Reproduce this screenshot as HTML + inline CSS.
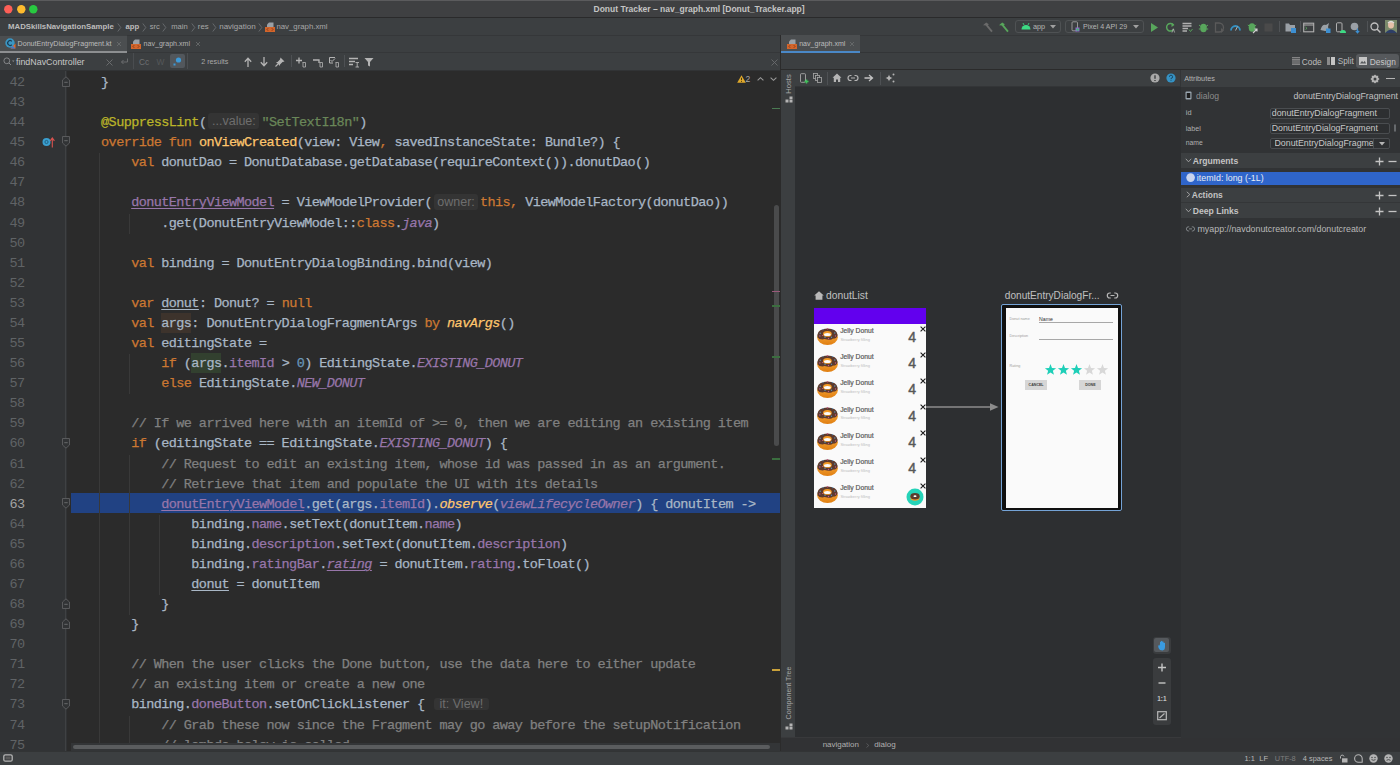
<!DOCTYPE html><html><head><meta charset="utf-8"><style>
*{margin:0;padding:0;box-sizing:border-box}
html,body{width:1400px;height:765px;overflow:hidden;background:#2b2b2b;font-family:"Liberation Sans",sans-serif}
#root{position:absolute;left:0;top:0;width:1400px;height:765px}
.t{position:absolute;white-space:pre;line-height:20px;height:20px}
.r{position:absolute}
.s{position:absolute;overflow:visible}
.code{position:absolute;left:71px;white-space:pre;-webkit-text-stroke:0.25px currentColor;font-family:"Liberation Mono",monospace;font-size:13.5px;letter-spacing:-0.58px;line-height:20px;height:20px;color:#a9b7c6}
.ln{position:absolute;left:0;width:24.5px;text-align:right;white-space:pre;font-family:"Liberation Mono",monospace;font-size:13.5px;letter-spacing:-0.58px;line-height:20px;height:20px;color:#606366}
.k{color:#cc7832}.fd{color:#ffc66d}.an{color:#bbb529}.st{color:#6a8759}.p{color:#9876aa}.i{font-style:italic}.n{color:#6897bb}.c{color:#808080}
.u{text-decoration:underline;text-underline-offset:2px;text-decoration-thickness:1px}
.hint{display:inline-block;position:relative;font-family:"Liberation Sans",sans-serif;font-size:12.5px;letter-spacing:0;-webkit-text-stroke:0;color:#6e6e6e;background:#343434;border-radius:3px;height:16px;line-height:16px;vertical-align:top;text-align:center;overflow:hidden}
</style></head><body><div class="r" style="left:0px;top:0px;width:1400px;height:17px;background:#3f4042;"></div>
<div class="r" style="left:0px;top:0px;width:1400px;height:1px;background:#5b5b5d;"></div>
<div class="r" style="left:0px;top:17px;width:1400px;height:1px;background:#2a2a2b;"></div>
<div class="r" style="left:0px;top:18px;width:1400px;height:17px;background:#3c3f41;"></div>
<div class="r" style="left:0px;top:35px;width:1400px;height:17px;background:#3c3f41;"></div>
<div class="r" style="left:0px;top:35px;width:1400px;height:1px;background:#353739;"></div>
<div class="r" style="left:0px;top:52px;width:781px;height:18px;background:#3c3f41;"></div>
<div class="r" style="left:0px;top:51.6px;width:781px;height:1px;background:#353739;"></div>
<div class="r" style="left:0px;top:69.5px;width:781px;height:1px;background:#313335;"></div>
<div class="r" style="left:781px;top:52px;width:619px;height:17px;background:#3c3f41;"></div>
<div class="r" style="left:781px;top:51.5px;width:619px;height:1px;background:#333537;"></div>
<div class="r" style="left:0px;top:70.5px;width:66.5px;height:681px;background:#313335;"></div>
<div class="r" style="left:66.5px;top:70.5px;width:714px;height:672px;background:#2b2b2b;"></div>
<div class="r" style="left:65.3px;top:70.5px;width:1px;height:681px;background:#3f4143;"></div>
<svg class="s" style="left:4.3999999999999995px;top:4.500000000000001px;" width="9" height="9" viewBox="0 0 9 9"><circle cx="4.3" cy="4.3" r="4.2" fill="#fe5f57"/></svg>
<svg class="s" style="left:16.9px;top:4.500000000000001px;" width="9" height="9" viewBox="0 0 9 9"><circle cx="4.3" cy="4.3" r="4.2" fill="#febb2e"/></svg>
<svg class="s" style="left:29.400000000000002px;top:4.500000000000001px;" width="9" height="9" viewBox="0 0 9 9"><circle cx="4.3" cy="4.3" r="4.2" fill="#28c840"/></svg>
<div class="t" style="left:593.5px;top:-1.4000000000000004px;font-size:8.5px;color:#c4c4c4;font-weight:bold;">Donut Tracker – nav_graph.xml [Donut_Tracker.app]</div>
<div class="r" style="left:71px;top:493.37999999999994px;width:710px;height:19.6px;background:#214283;"></div>
<div class="r" style="left:161.24px;top:312.65999999999997px;width:30.08px;height:20px;background:#3d332c;"></div>
<div class="r" style="left:191.32px;top:352.82px;width:30.08px;height:20px;background:#32402f;"></div>
<div class="r" style="left:98.5px;top:153.32px;width:1px;height:602.4px;background:#393939;"></div>
<div class="r" style="left:128.5px;top:213.56px;width:1px;height:20.08px;background:#393939;"></div>
<div class="r" style="left:128.5px;top:354.12px;width:1px;height:40.16px;background:#393939;"></div>
<div class="r" style="left:128.5px;top:454.52px;width:1px;height:160.64px;background:#393939;"></div>
<div class="r" style="left:128.5px;top:715.56px;width:1px;height:40.16px;background:#393939;"></div>
<div class="r" style="left:158.5px;top:514.76px;width:1px;height:80.32px;background:#393939;"></div>
<div class="ln" style="top:73.0px;">42</div>
<div class="code" style="top:73.0px">    }</div>
<div class="ln" style="top:93.08px;">43</div>
<div class="code" style="top:93.08px"></div>
<div class="ln" style="top:113.16px;">44</div>
<div class="code" style="top:113.16px">    <span class="an">@SuppressLint</span>(<span class="hint" style="width:51px;margin-left:2px;margin-right:2px;top:0.2px;height:16px;line-height:16px">...value:</span><span class="st">&quot;SetTextI18n&quot;</span>)</div>
<div class="ln" style="top:133.24px;">45</div>
<div class="code" style="top:133.24px">    <span class="k">override fun </span><span class="fd">onViewCreated</span>(view: View<span class="k">,</span> savedInstanceState: Bundle?) {</div>
<div class="ln" style="top:153.32px;">46</div>
<div class="code" style="top:153.32px">        <span class="k">val </span>donutDao = DonutDatabase.getDatabase(requireContext()).donutDao()</div>
<div class="ln" style="top:173.39999999999998px;">47</div>
<div class="code" style="top:173.39999999999998px"></div>
<div class="ln" style="top:193.48px;">48</div>
<div class="code" style="top:193.48px">        <span class="p u">donutEntryViewModel</span> = ViewModelProvider(<span class="hint" style="width:44px;margin-left:2px;margin-right:2px;top:0.2px;height:16px;line-height:16px">owner:</span><span class="k">this,</span> ViewModelFactory(donutDao))</div>
<div class="ln" style="top:213.56px;">49</div>
<div class="code" style="top:213.56px">            .get(DonutEntryViewModel::<span class="k">class</span>.<span class="p i">java</span>)</div>
<div class="ln" style="top:233.64px;">50</div>
<div class="code" style="top:233.64px"></div>
<div class="ln" style="top:253.71999999999997px;">51</div>
<div class="code" style="top:253.71999999999997px">        <span class="k">val </span>binding = DonutEntryDialogBinding.bind(view)</div>
<div class="ln" style="top:273.79999999999995px;">52</div>
<div class="code" style="top:273.79999999999995px"></div>
<div class="ln" style="top:293.88px;">53</div>
<div class="code" style="top:293.88px">        <span class="k">var </span><span class="u">donut</span>: Donut? = <span class="k">null</span></div>
<div class="ln" style="top:313.96px;">54</div>
<div class="code" style="top:313.96px">        <span class="k">val </span>args: DonutEntryDialogFragmentArgs <span class="k">by </span><span class="fd i">navArgs</span>()</div>
<div class="ln" style="top:334.03999999999996px;">55</div>
<div class="code" style="top:334.03999999999996px">        <span class="k">val </span>editingState =</div>
<div class="ln" style="top:354.12px;">56</div>
<div class="code" style="top:354.12px">            <span class="k">if </span>(args.<span class="p">itemId</span> &gt; <span class="n">0</span>) EditingState.<span class="p i">EXISTING_DONUT</span></div>
<div class="ln" style="top:374.2px;">57</div>
<div class="code" style="top:374.2px">            <span class="k">else </span>EditingState.<span class="p i">NEW_DONUT</span></div>
<div class="ln" style="top:394.28px;">58</div>
<div class="code" style="top:394.28px"></div>
<div class="ln" style="top:414.35999999999996px;">59</div>
<div class="code" style="top:414.35999999999996px">        <span class="c">// If we arrived here with an itemId of &gt;= 0, then we are editing an existing item</span></div>
<div class="ln" style="top:434.43999999999994px;">60</div>
<div class="code" style="top:434.43999999999994px">        <span class="k">if </span>(editingState == EditingState.<span class="p i">EXISTING_DONUT</span>) {</div>
<div class="ln" style="top:454.52px;">61</div>
<div class="code" style="top:454.52px">            <span class="c">// Request to edit an existing item, whose id was passed in as an argument.</span></div>
<div class="ln" style="top:474.59999999999997px;">62</div>
<div class="code" style="top:474.59999999999997px">            <span class="c">// Retrieve that item and populate the UI with its details</span></div>
<div class="ln" style="top:494.67999999999995px;color:#a4a3a3">63</div>
<div class="code" style="top:494.67999999999995px">            <span class="p u">donutEntryViewModel</span>.get(args.<span class="p">itemId</span>).<span class="fd i">observe</span>(<span class="p i">viewLifecycleOwner</span>) { donutItem -&gt;</div>
<div class="ln" style="top:514.76px;">64</div>
<div class="code" style="top:514.76px">                binding.<span class="p">name</span>.setText(donutItem.<span class="p">name</span>)</div>
<div class="ln" style="top:534.8399999999999px;">65</div>
<div class="code" style="top:534.8399999999999px">                binding.<span class="p">description</span>.setText(donutItem.<span class="p">description</span>)</div>
<div class="ln" style="top:554.92px;">66</div>
<div class="code" style="top:554.92px">                binding.<span class="p">ratingBar</span>.<span class="p i u">rating</span> = donutItem.<span class="p">rating</span>.toFloat()</div>
<div class="ln" style="top:575.0px;">67</div>
<div class="code" style="top:575.0px">                <span class="u">donut</span> = donutItem</div>
<div class="ln" style="top:595.0799999999999px;">68</div>
<div class="code" style="top:595.0799999999999px">            }</div>
<div class="ln" style="top:615.16px;">69</div>
<div class="code" style="top:615.16px">        }</div>
<div class="ln" style="top:635.24px;">70</div>
<div class="code" style="top:635.24px"></div>
<div class="ln" style="top:655.3199999999999px;">71</div>
<div class="code" style="top:655.3199999999999px">        <span class="c">// When the user clicks the Done button, use the data here to either update</span></div>
<div class="ln" style="top:675.4px;">72</div>
<div class="code" style="top:675.4px">        <span class="c">// an existing item or create a new one</span></div>
<div class="ln" style="top:695.4799999999999px;">73</div>
<div class="code" style="top:695.4799999999999px">        binding.<span class="p">doneButton</span>.setOnClickListener { <span class="hint" style="width:54.6px;margin-left:2px;margin-right:0px;top:2.5px;height:12.3px;line-height:12.3px">it: View!</span></div>
<div class="ln" style="top:715.56px;">74</div>
<div class="code" style="top:715.56px">            <span class="c">// Grab these now since the Fragment may go away before the setupNotification</span></div>
<div class="ln" style="top:735.64px;">75</div>
<div class="code" style="top:735.64px">            <span class="c">// lambda below is called</span></div>
<svg class="s" style="left:61.5px;top:76.1px;" width="9" height="11" viewBox="0 0 9 11"><path d="M0.5 10.5 V4 L4 0.8 L7.5 4 V10.5 Z" fill="#313335" stroke="#5d5f61" stroke-width="0.9"/><path d="M2.3 6.3 H5.7" stroke="#6e7072" stroke-width="0.9"/></svg>
<svg class="s" style="left:61.5px;top:136.34px;" width="9" height="11" viewBox="0 0 9 11"><path d="M0.5 0.5 V7 L4 10.2 L7.5 7 V0.5 Z" fill="#313335" stroke="#5d5f61" stroke-width="0.9"/><path d="M2.3 4.7 H5.7" stroke="#6e7072" stroke-width="0.9"/></svg>
<svg class="s" style="left:61.5px;top:437.53999999999996px;" width="9" height="11" viewBox="0 0 9 11"><path d="M0.5 0.5 V7 L4 10.2 L7.5 7 V0.5 Z" fill="#313335" stroke="#5d5f61" stroke-width="0.9"/><path d="M2.3 4.7 H5.7" stroke="#6e7072" stroke-width="0.9"/></svg>
<svg class="s" style="left:61.5px;top:497.78px;" width="9" height="11" viewBox="0 0 9 11"><path d="M0.5 0.5 V7 L4 10.2 L7.5 7 V0.5 Z" fill="#313335" stroke="#5d5f61" stroke-width="0.9"/><path d="M2.3 4.7 H5.7" stroke="#6e7072" stroke-width="0.9"/></svg>
<svg class="s" style="left:61.5px;top:598.18px;" width="9" height="11" viewBox="0 0 9 11"><path d="M0.5 10.5 V4 L4 0.8 L7.5 4 V10.5 Z" fill="#313335" stroke="#5d5f61" stroke-width="0.9"/><path d="M2.3 6.3 H5.7" stroke="#6e7072" stroke-width="0.9"/></svg>
<svg class="s" style="left:61.5px;top:618.26px;" width="9" height="11" viewBox="0 0 9 11"><path d="M0.5 10.5 V4 L4 0.8 L7.5 4 V10.5 Z" fill="#313335" stroke="#5d5f61" stroke-width="0.9"/><path d="M2.3 6.3 H5.7" stroke="#6e7072" stroke-width="0.9"/></svg>
<svg class="s" style="left:61.5px;top:698.5799999999999px;" width="9" height="11" viewBox="0 0 9 11"><path d="M0.5 0.5 V7 L4 10.2 L7.5 7 V0.5 Z" fill="#313335" stroke="#5d5f61" stroke-width="0.9"/><path d="M2.3 4.7 H5.7" stroke="#6e7072" stroke-width="0.9"/></svg>
<svg class="s" style="left:42px;top:136.84px;" width="16" height="11" viewBox="0 0 16 11"><circle cx="4.5" cy="5" r="4" fill="#3a9fd0"/><circle cx="4.5" cy="5" r="1.6" fill="none" stroke="#1e5a7a" stroke-width="0.9"/><path d="M10.3 10.5 V1.5 M8.2 3.8 L10.3 1 L12.4 3.8" stroke="#d9534f" stroke-width="1.1" fill="none"/></svg>
<svg class="s" style="left:737px;top:75px;" width="9" height="8" viewBox="0 0 9 8"><path d="M4.5 0.3 L8.8 7.7 H0.2 Z" fill="#e0a92b"/><path d="M4.5 2.8 V5.2 M4.5 6 V6.9" stroke="#3a2f10" stroke-width="0.9"/></svg>
<div class="t" style="left:745.5px;top:68.5px;font-size:8.5px;color:#a9a9a9;font-weight:normal;">2</div>
<svg class="s" style="left:757px;top:76.5px;" width="7" height="4" viewBox="0 0 7 4"><path d="M0.6 3.4 L3.5 0.7 L6.4 3.4" stroke="#9a9a9a" stroke-width="1.1" fill="none"/></svg>
<svg class="s" style="left:770px;top:76.5px;" width="7" height="4" viewBox="0 0 7 4"><path d="M0.6 0.6 L3.5 3.3 L6.4 0.6" stroke="#9a9a9a" stroke-width="1.1" fill="none"/></svg>
<div class="r" style="left:773.7px;top:205px;width:5px;height:240.5px;background:#4a4b4c;border-radius:3px"></div>
<div class="r" style="left:772px;top:107.7px;width:8.5px;height:1.6px;background:#4a7a52;"></div>
<div class="r" style="left:772px;top:290.59999999999997px;width:8.5px;height:1.6px;background:#9a5a7a;"></div>
<div class="r" style="left:772px;top:305.2px;width:8.5px;height:1.6px;background:#3b6e3f;"></div>
<div class="r" style="left:772px;top:356.2px;width:8.5px;height:1.6px;background:#3b6e3f;"></div>
<div class="r" style="left:772px;top:458.2px;width:8.5px;height:1.6px;background:#3b6e3f;"></div>
<div class="r" style="left:772px;top:669.2px;width:8.5px;height:1.6px;background:#c9a13a;"></div>
<div class="r" style="left:71px;top:742.5px;width:709.5px;height:8.5px;background:#333537;"></div>
<div class="r" style="left:73px;top:744.5px;width:697px;height:4.5px;background:#5a5c5e;border-radius:3px"></div>
<div class="r" style="left:0px;top:751px;width:1400px;height:14px;background:#3c3f41;"></div>
<div class="r" style="left:0px;top:750.5px;width:1400px;height:0.7px;background:#323435;"></div>
<svg class="s" style="left:3px;top:754px;" width="10" height="8" viewBox="0 0 10 8"><rect x="0.8" y="0.8" width="8.4" height="6.4" rx="1.5" fill="none" stroke="#b4b4b4" stroke-width="1.3"/><rect x="2.6" y="2.6" width="4.8" height="2.8" fill="#5a5a5a"/></svg>
<div class="t" style="left:1244.5px;top:749.2px;font-size:7.4px;color:#b8b8b8;font-weight:normal;">1:1</div>
<div class="t" style="left:1259.3px;top:749.2px;font-size:7.6px;color:#b8b8b8;font-weight:normal;">LF</div>
<div class="t" style="left:1274.8px;top:749.2px;font-size:7.4px;color:#7e7e7e;font-weight:normal;">UTF-8</div>
<div class="t" style="left:1302.8px;top:749.2px;font-size:7.4px;color:#b8b8b8;font-weight:normal;">4 spaces</div>
<svg class="s" style="left:1339px;top:754px;" width="9" height="9" viewBox="0 0 9 9"><path d="M1.5 4.5 V2.5 A1.8 1.8 0 0 1 5 2.5" stroke="#b4b4b4" stroke-width="1" fill="none"/><rect x="3" y="4.3" width="5.5" height="4.2" fill="#b4b4b4"/></svg>
<svg class="s" style="left:1354px;top:754px;" width="9" height="9" viewBox="0 0 9 9"><path d="M8.2 8.3 V4.5 A3.8 3.8 0 1 0 4.4 8.3 Z" stroke="#b4b4b4" stroke-width="1.1" fill="none" stroke-linejoin="round"/></svg>
<svg class="s" style="left:1369px;top:754px;" width="9" height="9" viewBox="0 0 9 9"><circle cx="4.5" cy="4.5" r="4.2" fill="#b4b4b4"/><circle cx="3" cy="3.5" r="0.7" fill="#3c3f41"/><circle cx="6" cy="3.5" r="0.7" fill="#3c3f41"/><path d="M2.5 5.6 Q4.5 6.9 6.5 5.6" stroke="#3c3f41" stroke-width="0.9" fill="none"/></svg>
<svg class="s" style="left:1384px;top:754px;" width="9" height="9" viewBox="0 0 9 9"><circle cx="4.5" cy="4.5" r="4.2" fill="#b4b4b4"/><circle cx="3" cy="3.5" r="0.7" fill="#3c3f41"/><circle cx="6" cy="3.5" r="0.7" fill="#3c3f41"/><path d="M2.5 6.3 Q4.5 5 6.5 6.3" stroke="#3c3f41" stroke-width="0.9" fill="none"/></svg>
<div class="t" style="left:8px;top:17.0px;font-size:7.8px;color:#bcbcbc;font-weight:bold;">MADSkillsNavigationSample</div>
<svg class="s" style="left:116.5px;top:22.5px;" width="5" height="9" viewBox="0 0 5 9"><path d="M0.8 0.5 L3.8 4.5 L0.8 8.5" stroke="#6a6d70" stroke-width="0.9" fill="none"/></svg>
<div class="t" style="left:125.5px;top:17.0px;font-size:7.7px;color:#bcbcbc;font-weight:bold;">app</div>
<svg class="s" style="left:141.5px;top:22.5px;" width="5" height="9" viewBox="0 0 5 9"><path d="M0.8 0.5 L3.8 4.5 L0.8 8.5" stroke="#6a6d70" stroke-width="0.9" fill="none"/></svg>
<div class="t" style="left:149.8px;top:17.0px;font-size:7.6px;color:#a8a8a8;font-weight:normal;">src</div>
<svg class="s" style="left:162px;top:22.5px;" width="5" height="9" viewBox="0 0 5 9"><path d="M0.8 0.5 L3.8 4.5 L0.8 8.5" stroke="#6a6d70" stroke-width="0.9" fill="none"/></svg>
<div class="t" style="left:171.2px;top:17.0px;font-size:7.6px;color:#a8a8a8;font-weight:normal;">main</div>
<svg class="s" style="left:190.5px;top:22.5px;" width="5" height="9" viewBox="0 0 5 9"><path d="M0.8 0.5 L3.8 4.5 L0.8 8.5" stroke="#6a6d70" stroke-width="0.9" fill="none"/></svg>
<div class="t" style="left:197.8px;top:17.0px;font-size:7.8px;color:#a8a8a8;font-weight:normal;">res</div>
<svg class="s" style="left:212px;top:22.5px;" width="5" height="9" viewBox="0 0 5 9"><path d="M0.8 0.5 L3.8 4.5 L0.8 8.5" stroke="#6a6d70" stroke-width="0.9" fill="none"/></svg>
<div class="t" style="left:219.2px;top:17.0px;font-size:8px;color:#a8a8a8;font-weight:normal;">navigation</div>
<svg class="s" style="left:258px;top:22.5px;" width="5" height="9" viewBox="0 0 5 9"><path d="M0.8 0.5 L3.8 4.5 L0.8 8.5" stroke="#6a6d70" stroke-width="0.9" fill="none"/></svg>
<svg class="s" style="left:265px;top:21.5px;" width="10" height="10" viewBox="0 0 10 10"><path d="M4 0.5 H8.5 V5 H2 V2.5 Z" fill="#9aa0a6"/><rect x="0" y="5" width="10" height="5" fill="#d2652b"/><path d="M3.2 6.2 L2 7.5 L3.2 8.8 M6.8 6.2 L8 7.5 L6.8 8.8" stroke="#7a2f10" stroke-width="0.8" fill="none"/></svg>
<div class="t" style="left:276.4px;top:17.0px;font-size:7.8px;color:#a8a8a8;font-weight:normal;">nav_graph.xml</div>
<svg class="s" style="left:981.5px;top:21.5px;" width="11" height="11" viewBox="0 0 11 11"><path d="M1 3.2 L4.2 0.6 L6.8 2.2 L5.6 3.4 Z" fill="#6b6b6b"/><path d="M4.2 2.6 L10 9.6" stroke="#6b6b6b" stroke-width="1.8"/></svg>
<svg class="s" style="left:997.7px;top:21.5px;" width="11" height="11" viewBox="0 0 11 11"><path d="M1 3.2 L4.2 0.6 L6.8 2.2 L5.6 3.4 Z" fill="#58a65c"/><path d="M4.2 2.6 L10 9.6" stroke="#58a65c" stroke-width="1.8"/></svg>
<div class="r" style="left:1015px;top:19.7px;width:46px;height:13.7px;background:none;border:1px solid #4f5254;border-radius:3px"></div>
<svg class="s" style="left:1021px;top:22px;" width="10" height="8" viewBox="0 0 10 8"><path d="M0.5 7.5 A4.5 4.5 0 0 1 9.5 7.5 Z" fill="#3ddc84"/><path d="M2 1 L3 3 M8 1 L7 3" stroke="#3ddc84" stroke-width="0.8"/></svg>
<div class="t" style="left:1033px;top:17.0px;font-size:7.3px;color:#b4b4b4;font-weight:normal;">app</div>
<svg class="s" style="left:1049.5px;top:25.2px;" width="6" height="4" viewBox="0 0 6 4"><path d="M0 0 H6 L3 3.5 Z" fill="#a0a0a0"/></svg>
<div class="r" style="left:1065px;top:19.7px;width:78.5px;height:13.7px;background:none;border:1px solid #4f5254;border-radius:3px"></div>
<svg class="s" style="left:1071px;top:21px;" width="9" height="11" viewBox="0 0 9 11"><rect x="1" y="0.8" width="5.5" height="9" rx="1" fill="none" stroke="#a0a0a0" stroke-width="0.9"/><rect x="4.5" y="6.5" width="4" height="4" fill="#8f6bd0"/><rect x="5.6" y="7.6" width="2" height="2" fill="#2fd05a"/></svg>
<div class="t" style="left:1083px;top:17.0px;font-size:7.1px;color:#b4b4b4;font-weight:normal;">Pixel 4 API 29</div>
<svg class="s" style="left:1132.5px;top:25.2px;" width="6" height="4" viewBox="0 0 6 4"><path d="M0 0 H6 L3 3.5 Z" fill="#a0a0a0"/></svg>
<svg class="s" style="left:1148.5px;top:21.5px;" width="11" height="11" viewBox="0 0 11 11"><path d="M2 1 L9 5.5 L2 10 Z" fill="#58a65c"/></svg>
<svg class="s" style="left:1164.5px;top:21.5px;" width="11" height="11" viewBox="0 0 11 11"><path d="M8.5 3 A3.8 3.8 0 1 0 8.8 7" stroke="#58a65c" stroke-width="1.5" fill="none"/><path d="M6.5 0.8 L9.5 3 L6.5 5" fill="#58a65c"/><path d="M7 10.5 L8.3 6.8 L9.6 10.5" stroke="#b0b0b0" stroke-width="0.8" fill="none"/></svg>
<svg class="s" style="left:1181.5px;top:21.5px;" width="11" height="11" viewBox="0 0 11 11"><path d="M0.5 1.5 H9.5 M0.5 4 H9.5 M0.5 6.5 H6 M0.5 9 H5" stroke="#b0b0b0" stroke-width="1.4"/><path d="M7 7.5 L8.5 9.5 L10.5 7" stroke="#58a65c" stroke-width="0.9" fill="none"/></svg>
<svg class="s" style="left:1197.5px;top:21.5px;" width="11" height="11" viewBox="0 0 11 11"><ellipse cx="5.5" cy="6" rx="3.3" ry="4.3" fill="#58a65c"/><path d="M1 3 L3 4.5 M10 3 L8 4.5 M0.8 7 H2.5 M10.2 7 H8.5" stroke="#58a65c" stroke-width="1"/></svg>
<svg class="s" style="left:1214.1px;top:21.5px;" width="11" height="11" viewBox="0 0 11 11"><path d="M1.5 1 H5 A4.5 4.5 0 0 1 5 10 H1.5 Z" fill="none" stroke="#5a5a5a" stroke-width="1.3"/><path d="M7 6 L10 8.5 L7 11 Z" fill="#5a5a5a"/></svg>
<svg class="s" style="left:1230.1px;top:21.5px;" width="11" height="11" viewBox="0 0 11 11"><path d="M1 8.5 A4.5 4.5 0 0 1 10 8.5" stroke="#3592c4" stroke-width="1.8" fill="none"/><path d="M5.5 8.5 L7.5 4.5" stroke="#b0b0b0" stroke-width="1"/></svg>
<svg class="s" style="left:1246.5px;top:21.5px;" width="11" height="11" viewBox="0 0 11 11"><ellipse cx="5" cy="5.5" rx="3.3" ry="4.2" fill="#58a65c"/><path d="M0.8 3 L2.5 4.3 M9.2 3 L7.5 4.3" stroke="#58a65c" stroke-width="1"/><path d="M6 11 L10 7 M7.5 7 H10 V9.5" stroke="#d0d0d0" stroke-width="1.1" fill="none"/></svg>
<svg class="s" style="left:1262.5px;top:21.5px;" width="11" height="11" viewBox="0 0 11 11"><rect x="1.5" y="1.5" width="8" height="8" fill="#4a4a4a"/></svg>
<svg class="s" style="left:1284.5px;top:21.5px;" width="11" height="11" viewBox="0 0 11 11"><path d="M0.5 1.5 H4 L5 3 H10 V9.5 H0.5 Z" fill="#9aa0a6"/><rect x="6" y="6" width="5" height="5" fill="#3d8fd1"/></svg>
<svg class="s" style="left:1302.5px;top:21.5px;" width="11" height="11" viewBox="0 0 11 11"><rect x="0.7" y="1.2" width="10" height="8.6" fill="none" stroke="#b0b0b0" stroke-width="1.1"/><path d="M0.7 3 H10.7" stroke="#b0b0b0" stroke-width="1"/><path d="M2.5 5 L4 6.3 L2.5 7.6" stroke="#58a65c" stroke-width="0.9" fill="none"/></svg>
<svg class="s" style="left:1319.5px;top:21.5px;" width="11" height="11" viewBox="0 0 11 11"><path d="M0.5 8 Q2 2 6 3 L9 1 L8 5 Q10 9 5 9 Z" fill="#9aa0a6"/><rect x="6" y="6.5" width="4.5" height="4.5" fill="#3d8fd1"/></svg>
<svg class="s" style="left:1334.5px;top:21.5px;" width="11" height="11" viewBox="0 0 11 11"><rect x="1.5" y="0.8" width="5.5" height="9" rx="1" fill="none" stroke="#b0b0b0" stroke-width="1"/><path d="M5 11 A3 3 0 0 1 11 11 Z" fill="#3ddc84"/></svg>
<svg class="s" style="left:1350.1px;top:21.5px;" width="11" height="11" viewBox="0 0 11 11"><circle cx="4.5" cy="4.5" r="3.8" fill="#9aa0a6"/><path d="M7.5 6.5 V10.5 M5.8 8.8 L7.5 10.8 L9.2 8.8" stroke="#3d8fd1" stroke-width="1.2" fill="none"/></svg>
<svg class="s" style="left:1370.0px;top:21.5px;" width="11" height="11" viewBox="0 0 11 11"><circle cx="4.5" cy="4.5" r="3.5" stroke="#c0c0c0" stroke-width="1.3" fill="none"/><path d="M7 7 L10.5 10.5" stroke="#c0c0c0" stroke-width="1.5"/></svg>
<div class="r" style="left:1278.6px;top:21px;width:0.8px;height:11px;background:#505356;"></div>
<div class="r" style="left:1299.5px;top:21px;width:0.8px;height:11px;background:#505356;"></div>
<div class="r" style="left:1367px;top:21px;width:0.8px;height:11px;background:#505356;"></div>
<svg class="s" style="left:1385px;top:20px;" width="12" height="13" viewBox="0 0 12 13"><rect x="0" y="0" width="12" height="13" fill="#7a8a6a"/><ellipse cx="6" cy="5" rx="3" ry="3.6" fill="#e6c0a8"/><path d="M0 13 Q6 6 12 13 Z" fill="#2d3e66"/><path d="M3 3 Q6 0 9 3" stroke="#ddd" stroke-width="1.2" fill="none"/></svg>
<div class="r" style="left:0px;top:35px;width:127px;height:17px;background:#4b4e50;"></div>
<div class="r" style="left:0px;top:35px;width:127px;height:0.9px;background:#3c3f41;"></div>
<div class="r" style="left:0px;top:50.8px;width:127px;height:2px;background:#8d8f91;"></div>
<svg class="s" style="left:5px;top:38px;" width="11" height="11" viewBox="0 0 11 11"><circle cx="5" cy="5" r="4.7" fill="#3b97c4"/><path d="M6.8 3.3 A2.4 2.4 0 1 0 6.8 6.7" stroke="#1b3c55" stroke-width="1.2" fill="none"/><path d="M5.5 10.5 L10.5 5.5 V10.5 Z" fill="#e06a2a"/><path d="M5.5 10.5 L8 8 L10.5 10.5 Z" fill="#3b7bd8"/></svg>
<div class="t" style="left:17.5px;top:34.0px;font-size:7.15px;color:#bcbcbc;font-weight:normal;">DonutEntryDialogFragment.kt</div>
<svg class="s" style="left:115.5px;top:41.0px;" width="6" height="6" viewBox="0 0 6 6"><path d="M1 1 L5 5 M5 1 L1 5" stroke="#6c6e70" stroke-width="0.8"/></svg>
<svg class="s" style="left:131px;top:38.5px;" width="10" height="10" viewBox="0 0 10 10"><path d="M4 0.5 H8.5 V5 H2 V2.5 Z" fill="#9aa0a6"/><rect x="0" y="5" width="10" height="5" fill="#d2652b"/><path d="M3.2 6.2 L2 7.5 L3.2 8.8 M6.8 6.2 L8 7.5 L6.8 8.8" stroke="#7a2f10" stroke-width="0.8" fill="none"/></svg>
<div class="t" style="left:143.5px;top:34.0px;font-size:7.1px;color:#b4b4b4;font-weight:normal;">nav_graph.xml</div>
<svg class="s" style="left:194.5px;top:41.0px;" width="6" height="6" viewBox="0 0 6 6"><path d="M1 1 L5 5 M5 1 L1 5" stroke="#6c6e70" stroke-width="0.8"/></svg>
<div class="r" style="left:781px;top:35px;width:79px;height:17px;background:#4b4e50;"></div>
<div class="r" style="left:781px;top:50.5px;width:79px;height:2.4px;background:#4a88c7;"></div>
<svg class="s" style="left:787px;top:38.5px;" width="10" height="10" viewBox="0 0 10 10"><path d="M4 0.5 H8.5 V5 H2 V2.5 Z" fill="#9aa0a6"/><rect x="0" y="5" width="10" height="5" fill="#d2652b"/><path d="M3.2 6.2 L2 7.5 L3.2 8.8 M6.8 6.2 L8 7.5 L6.8 8.8" stroke="#7a2f10" stroke-width="0.8" fill="none"/></svg>
<div class="t" style="left:799.2px;top:34.0px;font-size:7.05px;color:#bcbcbc;font-weight:normal;">nav_graph.xml</div>
<svg class="s" style="left:848.5px;top:41.0px;" width="6" height="6" viewBox="0 0 6 6"><path d="M1 1 L5 5 M5 1 L1 5" stroke="#6c6e70" stroke-width="0.8"/></svg>
<div class="r" style="left:780.3px;top:35px;width:1px;height:716px;background:#2b2b2b;"></div>
<svg class="s" style="left:3px;top:57px;" width="12" height="9" viewBox="0 0 12 9"><circle cx="3.8" cy="3.8" r="2.9" stroke="#8a8c8e" stroke-width="0.9" fill="none"/><path d="M6 6 L8 8" stroke="#8a8c8e" stroke-width="1"/><path d="M9 3.5 H11.5 L10.25 5 Z" fill="#8a8c8e"/></svg>
<div class="t" style="left:16px;top:52.2px;font-size:8.9px;color:#c8c8c8;font-weight:normal;">findNavController</div>
<svg class="s" style="left:105.5px;top:58.7px;" width="7" height="7" viewBox="0 0 7 7"><path d="M0.5 0.5 L6.5 6.5 M6.5 0.5 L0.5 6.5" stroke="#6e7072" stroke-width="0.9"/></svg>
<svg class="s" style="left:119.5px;top:58.2px;" width="9" height="8" viewBox="0 0 9 8"><path d="M7.5 0.5 V4 H1.5 M3.5 2 L1.5 4 L3.5 6" stroke="#6e7072" stroke-width="0.9" fill="none"/></svg>
<div class="r" style="left:133px;top:53px;width:0.8px;height:16px;background:#4a4d50;"></div>
<div class="t" style="left:139px;top:52.2px;font-size:8.4px;color:#6e7072;font-weight:normal;">Cc</div>
<div class="t" style="left:156.5px;top:52.2px;font-size:8.4px;color:#55585a;font-weight:normal;">W</div>
<div class="r" style="left:169.5px;top:54px;width:15px;height:14px;background:#52575c;border-radius:2px"></div>
<svg class="s" style="left:172px;top:56px;" width="11" height="10" viewBox="0 0 11 10"><circle cx="6.5" cy="4" r="2.6" fill="#3d9ad8"/><rect x="1.5" y="7.5" width="2" height="2" fill="#3d9ad8"/></svg>
<div class="r" style="left:187px;top:53px;width:0.8px;height:16px;background:#4a4d50;"></div>
<div class="t" style="left:201.2px;top:52.2px;font-size:7.2px;color:#a8a8a8;font-weight:normal;">2 results</div>
<svg class="s" style="left:242.9px;top:57.2px;" width="10" height="10" viewBox="0 0 10 10"><path d="M5 10 V1.5 M1.8 4.7 L5 1.3 L8.2 4.7" stroke="#b4b4b4" stroke-width="1.3" fill="none"/></svg>
<svg class="s" style="left:259px;top:57.2px;" width="10" height="10" viewBox="0 0 10 10"><path d="M5 0 V8.5 M1.8 5.3 L5 8.7 L8.2 5.3" stroke="#b4b4b4" stroke-width="1.3" fill="none"/></svg>
<svg class="s" style="left:275px;top:57.2px;" width="10" height="10" viewBox="0 0 10 10"><path d="M5.5 0.5 L9.5 4.5 L7.5 5 L5 7.5 L5 9 L1 5 L2.5 5 L5 2.5 Z" fill="#b4b4b4"/><path d="M3 7 L0.5 9.5" stroke="#b4b4b4" stroke-width="1.1"/></svg>
<svg class="s" style="left:296px;top:57.2px;" width="10" height="10" viewBox="0 0 10 10"><path d="M3 0.5 V6.5 M0 3.5 H6" stroke="#b4b4b4" stroke-width="1.3"/><path d="M6.5 5.5 H9.5 M7 5.5 V10 H9.5 V5.5" stroke="#b4b4b4" stroke-width="0.8" fill="none"/></svg>
<svg class="s" style="left:313px;top:57.2px;" width="10" height="10" viewBox="0 0 10 10"><path d="M0 3 H6 V6" stroke="#b4b4b4" stroke-width="1.3" fill="none"/><path d="M6.5 5.5 H9.5 M7 5.5 V10 H9.5 V5.5" stroke="#b4b4b4" stroke-width="0.8" fill="none"/></svg>
<svg class="s" style="left:329px;top:57.2px;" width="10" height="10" viewBox="0 0 10 10"><path d="M0.5 0.5 H6 M0.5 0.5 V6 H4" stroke="#b4b4b4" stroke-width="1" fill="none"/><path d="M1.5 3 L3 4.5 L6 1.5" stroke="#b4b4b4" stroke-width="1" fill="none"/><path d="M6.5 5.5 H9.5 M7 5.5 V10 H9.5 V5.5" stroke="#b4b4b4" stroke-width="0.8" fill="none"/></svg>
<svg class="s" style="left:349px;top:57.2px;" width="10" height="10" viewBox="0 0 10 10"><path d="M0 1.5 H9 M0 4.5 H6 M0 7.5 H4" stroke="#b4b4b4" stroke-width="1.3"/><path d="M6.5 5.5 H10 M8.2 5.5 V10 M6.5 10 H10" stroke="#b4b4b4" stroke-width="0.9"/></svg>
<svg class="s" style="left:364px;top:57.2px;" width="10" height="10" viewBox="0 0 10 10"><path d="M0.5 1 H9.5 L6 5 V9.5 L4 8.5 V5 Z" fill="#b4b4b4"/></svg>
<div class="r" style="left:291px;top:55px;width:0.8px;height:12px;background:#4e5154;"></div>
<div class="r" style="left:344px;top:55px;width:0.8px;height:12px;background:#4e5154;"></div>
<svg class="s" style="left:770.5px;top:58.7px;" width="7" height="7" viewBox="0 0 7 7"><path d="M0.5 0.5 L6.5 6.5 M6.5 0.5 L0.5 6.5" stroke="#6a6c6e" stroke-width="0.9"/></svg>
<svg class="s" style="left:1291.5px;top:57px;" width="8" height="8" viewBox="0 0 8 8"><path d="M0 0.8 H8 M0 2.9 H8 M0 5 H8 M0 7.1 H8" stroke="#9a9a9a" stroke-width="1.1"/></svg>
<div class="t" style="left:1301.8px;top:52.2px;font-size:8.35px;color:#bcbcbc;font-weight:normal;">Code</div>
<svg class="s" style="left:1327px;top:57px;" width="8" height="8" viewBox="0 0 8 8"><rect x="0" y="0" width="3" height="8" fill="#8a8a8a"/><rect x="4" y="0" width="4" height="8" fill="#c4c4c4"/></svg>
<div class="t" style="left:1337.8px;top:52.2px;font-size:8.2px;color:#bcbcbc;font-weight:normal;">Split</div>
<div class="r" style="left:1356px;top:54px;width:43px;height:13.6px;background:#56595c;border-radius:3px"></div>
<svg class="s" style="left:1359px;top:57px;" width="8" height="8" viewBox="0 0 8 8"><rect x="0" y="0" width="8" height="8" fill="#c4c4c4"/><path d="M1 6.5 L3 4 L4.5 5.5 L5.8 3.8 L7 6.5 Z" fill="#56595c"/></svg>
<div class="t" style="left:1369.8px;top:52.2px;font-size:8.35px;color:#c8c8c8;font-weight:normal;">Design</div>
<div class="r" style="left:781px;top:69.5px;width:14px;height:668px;background:#3c3f41;"></div>
<div class="r" style="left:794.5px;top:69.5px;width:1px;height:668px;background:#333537;"></div>
<div class="r" style="left:795px;top:69.5px;width:386px;height:17px;background:#3c3f41;"></div>
<div class="r" style="left:795px;top:86.3px;width:386px;height:0.8px;background:#333537;"></div>
<div class="r" style="left:795px;top:87px;width:386px;height:650.5px;background:#2d2f31;"></div>
<div class="t" style="left:779px;top:74px;width:20px;height:20px;font-size:7.6px;color:#a8a8a8;line-height:20px;transform-origin:10px 10px;transform:translate(0px,0px) rotate(-90deg);text-align:center">Hosts</div>
<svg class="s" style="left:785px;top:96px;" width="8" height="7" viewBox="0 0 8 7"><rect x="0.5" y="3.5" width="3" height="3" fill="#b4b4b4"/><rect x="4.5" y="0.5" width="3" height="3" fill="#b4b4b4"/><rect x="4.5" y="4" width="3" height="2.5" fill="#b4b4b4"/></svg>
<div class="t" style="left:751px;top:682.5px;width:76px;height:20px;font-size:7.1px;color:#a8a8a8;line-height:20px;transform-origin:38px 10px;transform:rotate(-90deg);text-align:center">Component Tree</div>
<svg class="s" style="left:785px;top:723px;" width="8" height="7" viewBox="0 0 8 7"><rect x="0.5" y="3.5" width="3" height="3" fill="#b4b4b4"/><rect x="4.5" y="0.5" width="3" height="3" fill="#b4b4b4"/><rect x="4.5" y="4" width="3" height="2.5" fill="#b4b4b4"/></svg>
<svg class="s" style="left:799.4px;top:73.3px;" width="10" height="11" viewBox="0 0 10 11"><rect x="1.5" y="0.7" width="5" height="8.6" rx="0.8" fill="none" stroke="#a8a8a8" stroke-width="0.9"/><path d="M7.5 6.5 V10.5 M5.5 8.5 H9.5" stroke="#3fbf5a" stroke-width="1.5"/></svg>
<svg class="s" style="left:812.5px;top:73.3px;" width="10" height="11" viewBox="0 0 10 11"><rect x="0.5" y="0.5" width="4" height="5" fill="none" stroke="#a8a8a8" stroke-width="0.8"/><rect x="2.5" y="2.5" width="4" height="5" fill="#3c3f41" stroke="#a8a8a8" stroke-width="0.8"/><rect x="4.5" y="4.5" width="4" height="5" fill="#3c3f41" stroke="#a8a8a8" stroke-width="0.8"/></svg>
<svg class="s" style="left:831.6px;top:73.3px;" width="10" height="11" viewBox="0 0 10 11"><path d="M5 0.5 L9.5 4.8 H8.2 V9 H1.8 V4.8 H0.5 Z" fill="#b4b4b4"/><rect x="4" y="6.5" width="2" height="2.5" fill="#3c3f41"/></svg>
<svg class="s" style="left:848px;top:73.3px;" width="10" height="11" viewBox="0 0 10 11"><path d="M3.5 2.5 H2.5 A2.5 2.5 0 0 0 2.5 7.5 H3.5 M6.5 2.5 H7.5 A2.5 2.5 0 0 1 7.5 7.5 H6.5 M3 5 H7" stroke="#b4b4b4" stroke-width="1.2" fill="none"/></svg>
<svg class="s" style="left:864px;top:73.3px;" width="10" height="11" viewBox="0 0 10 11"><path d="M0.5 5 H8 M5 2 L8.5 5 L5 8" stroke="#c4c4c4" stroke-width="1.3" fill="none"/></svg>
<svg class="s" style="left:884.6px;top:73.3px;" width="10" height="11" viewBox="0 0 10 11"><path d="M4 1.5 Q4.5 4.5 7.5 5 Q4.5 5.5 4 8.5 Q3.5 5.5 0.5 5 Q3.5 4.5 4 1.5 Z" fill="#b4b4b4"/><circle cx="8.5" cy="1.5" r="1" fill="#b4b4b4"/><circle cx="8.5" cy="8.5" r="1" fill="#b4b4b4"/></svg>
<div class="r" style="left:826.6px;top:72px;width:0.8px;height:13px;background:#4e5154;"></div>
<div class="r" style="left:879.5px;top:72px;width:0.8px;height:13px;background:#4e5154;"></div>
<svg class="s" style="left:1149.5px;top:73.3px;" width="10" height="10" viewBox="0 0 10 10"><circle cx="5" cy="5" r="4.6" fill="#a8a8a8"/><path d="M5 2.2 V5.8 M5 7 V7.9" stroke="#3c3f41" stroke-width="1.4"/></svg>
<svg class="s" style="left:1166px;top:73.3px;" width="10" height="10" viewBox="0 0 10 10"><circle cx="5" cy="5" r="4.6" fill="#3592c4"/><path d="M3.4 3.8 A1.6 1.6 0 1 1 5 5.4 V6.2 M5 7.2 V7.9" stroke="#1b4a66" stroke-width="1" fill="none"/></svg>
<svg class="s" style="left:814px;top:291px;" width="10" height="9" viewBox="0 0 10 9"><path d="M5 0.3 L9.8 4.6 H8.4 V8.7 H1.6 V4.6 H0.2 Z" fill="#b8b8b8"/></svg>
<div class="t" style="left:826px;top:286.3px;font-size:10.3px;color:#c0c0c0;font-weight:normal;">donutList</div>
<div class="r" style="left:814px;top:308px;width:112px;height:199.5px;background:#fafafa;"></div>
<div class="r" style="left:814px;top:308px;width:112px;height:15.5px;background:#6200ee;"></div>
<svg class="s" style="left:816.9px;top:327.3px;" width="21" height="18" viewBox="0 0 21 18"><defs><linearGradient id="dg" x1="0" y1="0" x2="0" y2="1"><stop offset="0" stop-color="#ffb443"/><stop offset="1" stop-color="#e07f12"/></linearGradient></defs><ellipse cx="10.5" cy="10.3" rx="10.4" ry="7.6" fill="url(#dg)"/><path d="M0.3 8 A10.2 6.6 0 0 1 20.7 8 Q20.5 11 18 11.5 Q16 11 14.5 12.5 Q12 13.2 10 12.5 Q7.5 11.5 5.5 12.5 Q2 12.5 0.6 10.2 Z" fill="#5e3b2e"/><ellipse cx="10.4" cy="6.9" rx="4.4" ry="2.9" fill="#f39a24"/><ellipse cx="10.4" cy="7.6" rx="3.4" ry="1.5" fill="#fbfbfb"/><g fill="#5a97c0"><circle cx="6" cy="2.6" r="0.7"/><circle cx="15.5" cy="2.6" r="0.7"/><circle cx="3.2" cy="6.3" r="0.7"/><circle cx="17.8" cy="6" r="0.7"/><circle cx="8" cy="10.3" r="0.7"/><circle cx="14.5" cy="10.3" r="0.7"/></g><g fill="#c75c86"><circle cx="10.5" cy="1.7" r="0.7"/><circle cx="2.8" cy="9" r="0.7"/><circle cx="18.5" cy="9" r="0.7"/><circle cx="11.5" cy="11.5" r="0.7"/><circle cx="5.5" cy="8.5" r="0.6"/></g></svg>
<div class="t" style="left:840.2px;top:321.0px;font-size:6.75px;color:#5a5a5a;font-weight:normal;-webkit-text-stroke:0.2px #5a5a5a">Jelly Donut</div>
<div class="t" style="left:840.4px;top:329.7px;font-size:4.0px;color:#bdbdbd;font-weight:normal;">Strawberry filling</div>
<svg class="s" style="left:919.5px;top:325.5px;" width="6" height="6" viewBox="0 0 6 6"><path d="M0.6 0.6 L5.4 5.4 M5.4 0.6 L0.6 5.4" stroke="#1a1a1a" stroke-width="1.1"/></svg>
<div class="t" style="left:908.3px;top:326.9px;font-size:14px;color:#585858;font-weight:normal;-webkit-text-stroke:0.45px #585858">4</div>
<svg class="s" style="left:816.9px;top:353.5px;" width="21" height="18" viewBox="0 0 21 18"><defs><linearGradient id="dg" x1="0" y1="0" x2="0" y2="1"><stop offset="0" stop-color="#ffb443"/><stop offset="1" stop-color="#e07f12"/></linearGradient></defs><ellipse cx="10.5" cy="10.3" rx="10.4" ry="7.6" fill="url(#dg)"/><path d="M0.3 8 A10.2 6.6 0 0 1 20.7 8 Q20.5 11 18 11.5 Q16 11 14.5 12.5 Q12 13.2 10 12.5 Q7.5 11.5 5.5 12.5 Q2 12.5 0.6 10.2 Z" fill="#5e3b2e"/><ellipse cx="10.4" cy="6.9" rx="4.4" ry="2.9" fill="#f39a24"/><ellipse cx="10.4" cy="7.6" rx="3.4" ry="1.5" fill="#fbfbfb"/><g fill="#5a97c0"><circle cx="6" cy="2.6" r="0.7"/><circle cx="15.5" cy="2.6" r="0.7"/><circle cx="3.2" cy="6.3" r="0.7"/><circle cx="17.8" cy="6" r="0.7"/><circle cx="8" cy="10.3" r="0.7"/><circle cx="14.5" cy="10.3" r="0.7"/></g><g fill="#c75c86"><circle cx="10.5" cy="1.7" r="0.7"/><circle cx="2.8" cy="9" r="0.7"/><circle cx="18.5" cy="9" r="0.7"/><circle cx="11.5" cy="11.5" r="0.7"/><circle cx="5.5" cy="8.5" r="0.6"/></g></svg>
<div class="t" style="left:840.2px;top:347.2px;font-size:6.75px;color:#5a5a5a;font-weight:normal;-webkit-text-stroke:0.2px #5a5a5a">Jelly Donut</div>
<div class="t" style="left:840.4px;top:355.9px;font-size:4.0px;color:#bdbdbd;font-weight:normal;">Strawberry filling</div>
<svg class="s" style="left:919.5px;top:351.7px;" width="6" height="6" viewBox="0 0 6 6"><path d="M0.6 0.6 L5.4 5.4 M5.4 0.6 L0.6 5.4" stroke="#1a1a1a" stroke-width="1.1"/></svg>
<div class="t" style="left:908.3px;top:353.09999999999997px;font-size:14px;color:#585858;font-weight:normal;-webkit-text-stroke:0.45px #585858">4</div>
<svg class="s" style="left:816.9px;top:379.7px;" width="21" height="18" viewBox="0 0 21 18"><defs><linearGradient id="dg" x1="0" y1="0" x2="0" y2="1"><stop offset="0" stop-color="#ffb443"/><stop offset="1" stop-color="#e07f12"/></linearGradient></defs><ellipse cx="10.5" cy="10.3" rx="10.4" ry="7.6" fill="url(#dg)"/><path d="M0.3 8 A10.2 6.6 0 0 1 20.7 8 Q20.5 11 18 11.5 Q16 11 14.5 12.5 Q12 13.2 10 12.5 Q7.5 11.5 5.5 12.5 Q2 12.5 0.6 10.2 Z" fill="#5e3b2e"/><ellipse cx="10.4" cy="6.9" rx="4.4" ry="2.9" fill="#f39a24"/><ellipse cx="10.4" cy="7.6" rx="3.4" ry="1.5" fill="#fbfbfb"/><g fill="#5a97c0"><circle cx="6" cy="2.6" r="0.7"/><circle cx="15.5" cy="2.6" r="0.7"/><circle cx="3.2" cy="6.3" r="0.7"/><circle cx="17.8" cy="6" r="0.7"/><circle cx="8" cy="10.3" r="0.7"/><circle cx="14.5" cy="10.3" r="0.7"/></g><g fill="#c75c86"><circle cx="10.5" cy="1.7" r="0.7"/><circle cx="2.8" cy="9" r="0.7"/><circle cx="18.5" cy="9" r="0.7"/><circle cx="11.5" cy="11.5" r="0.7"/><circle cx="5.5" cy="8.5" r="0.6"/></g></svg>
<div class="t" style="left:840.2px;top:373.4px;font-size:6.75px;color:#5a5a5a;font-weight:normal;-webkit-text-stroke:0.2px #5a5a5a">Jelly Donut</div>
<div class="t" style="left:840.4px;top:382.09999999999997px;font-size:4.0px;color:#bdbdbd;font-weight:normal;">Strawberry filling</div>
<svg class="s" style="left:919.5px;top:377.9px;" width="6" height="6" viewBox="0 0 6 6"><path d="M0.6 0.6 L5.4 5.4 M5.4 0.6 L0.6 5.4" stroke="#1a1a1a" stroke-width="1.1"/></svg>
<div class="t" style="left:908.3px;top:379.29999999999995px;font-size:14px;color:#585858;font-weight:normal;-webkit-text-stroke:0.45px #585858">4</div>
<svg class="s" style="left:816.9px;top:405.90000000000003px;" width="21" height="18" viewBox="0 0 21 18"><defs><linearGradient id="dg" x1="0" y1="0" x2="0" y2="1"><stop offset="0" stop-color="#ffb443"/><stop offset="1" stop-color="#e07f12"/></linearGradient></defs><ellipse cx="10.5" cy="10.3" rx="10.4" ry="7.6" fill="url(#dg)"/><path d="M0.3 8 A10.2 6.6 0 0 1 20.7 8 Q20.5 11 18 11.5 Q16 11 14.5 12.5 Q12 13.2 10 12.5 Q7.5 11.5 5.5 12.5 Q2 12.5 0.6 10.2 Z" fill="#5e3b2e"/><ellipse cx="10.4" cy="6.9" rx="4.4" ry="2.9" fill="#f39a24"/><ellipse cx="10.4" cy="7.6" rx="3.4" ry="1.5" fill="#fbfbfb"/><g fill="#5a97c0"><circle cx="6" cy="2.6" r="0.7"/><circle cx="15.5" cy="2.6" r="0.7"/><circle cx="3.2" cy="6.3" r="0.7"/><circle cx="17.8" cy="6" r="0.7"/><circle cx="8" cy="10.3" r="0.7"/><circle cx="14.5" cy="10.3" r="0.7"/></g><g fill="#c75c86"><circle cx="10.5" cy="1.7" r="0.7"/><circle cx="2.8" cy="9" r="0.7"/><circle cx="18.5" cy="9" r="0.7"/><circle cx="11.5" cy="11.5" r="0.7"/><circle cx="5.5" cy="8.5" r="0.6"/></g></svg>
<div class="t" style="left:840.2px;top:399.6px;font-size:6.75px;color:#5a5a5a;font-weight:normal;-webkit-text-stroke:0.2px #5a5a5a">Jelly Donut</div>
<div class="t" style="left:840.4px;top:408.3px;font-size:4.0px;color:#bdbdbd;font-weight:normal;">Strawberry filling</div>
<svg class="s" style="left:919.5px;top:404.1px;" width="6" height="6" viewBox="0 0 6 6"><path d="M0.6 0.6 L5.4 5.4 M5.4 0.6 L0.6 5.4" stroke="#1a1a1a" stroke-width="1.1"/></svg>
<div class="t" style="left:908.3px;top:405.5px;font-size:14px;color:#585858;font-weight:normal;-webkit-text-stroke:0.45px #585858">4</div>
<svg class="s" style="left:816.9px;top:432.1px;" width="21" height="18" viewBox="0 0 21 18"><defs><linearGradient id="dg" x1="0" y1="0" x2="0" y2="1"><stop offset="0" stop-color="#ffb443"/><stop offset="1" stop-color="#e07f12"/></linearGradient></defs><ellipse cx="10.5" cy="10.3" rx="10.4" ry="7.6" fill="url(#dg)"/><path d="M0.3 8 A10.2 6.6 0 0 1 20.7 8 Q20.5 11 18 11.5 Q16 11 14.5 12.5 Q12 13.2 10 12.5 Q7.5 11.5 5.5 12.5 Q2 12.5 0.6 10.2 Z" fill="#5e3b2e"/><ellipse cx="10.4" cy="6.9" rx="4.4" ry="2.9" fill="#f39a24"/><ellipse cx="10.4" cy="7.6" rx="3.4" ry="1.5" fill="#fbfbfb"/><g fill="#5a97c0"><circle cx="6" cy="2.6" r="0.7"/><circle cx="15.5" cy="2.6" r="0.7"/><circle cx="3.2" cy="6.3" r="0.7"/><circle cx="17.8" cy="6" r="0.7"/><circle cx="8" cy="10.3" r="0.7"/><circle cx="14.5" cy="10.3" r="0.7"/></g><g fill="#c75c86"><circle cx="10.5" cy="1.7" r="0.7"/><circle cx="2.8" cy="9" r="0.7"/><circle cx="18.5" cy="9" r="0.7"/><circle cx="11.5" cy="11.5" r="0.7"/><circle cx="5.5" cy="8.5" r="0.6"/></g></svg>
<div class="t" style="left:840.2px;top:425.8px;font-size:6.75px;color:#5a5a5a;font-weight:normal;-webkit-text-stroke:0.2px #5a5a5a">Jelly Donut</div>
<div class="t" style="left:840.4px;top:434.5px;font-size:4.0px;color:#bdbdbd;font-weight:normal;">Strawberry filling</div>
<svg class="s" style="left:919.5px;top:430.3px;" width="6" height="6" viewBox="0 0 6 6"><path d="M0.6 0.6 L5.4 5.4 M5.4 0.6 L0.6 5.4" stroke="#1a1a1a" stroke-width="1.1"/></svg>
<div class="t" style="left:908.3px;top:431.7px;font-size:14px;color:#585858;font-weight:normal;-webkit-text-stroke:0.45px #585858">4</div>
<svg class="s" style="left:816.9px;top:458.3px;" width="21" height="18" viewBox="0 0 21 18"><defs><linearGradient id="dg" x1="0" y1="0" x2="0" y2="1"><stop offset="0" stop-color="#ffb443"/><stop offset="1" stop-color="#e07f12"/></linearGradient></defs><ellipse cx="10.5" cy="10.3" rx="10.4" ry="7.6" fill="url(#dg)"/><path d="M0.3 8 A10.2 6.6 0 0 1 20.7 8 Q20.5 11 18 11.5 Q16 11 14.5 12.5 Q12 13.2 10 12.5 Q7.5 11.5 5.5 12.5 Q2 12.5 0.6 10.2 Z" fill="#5e3b2e"/><ellipse cx="10.4" cy="6.9" rx="4.4" ry="2.9" fill="#f39a24"/><ellipse cx="10.4" cy="7.6" rx="3.4" ry="1.5" fill="#fbfbfb"/><g fill="#5a97c0"><circle cx="6" cy="2.6" r="0.7"/><circle cx="15.5" cy="2.6" r="0.7"/><circle cx="3.2" cy="6.3" r="0.7"/><circle cx="17.8" cy="6" r="0.7"/><circle cx="8" cy="10.3" r="0.7"/><circle cx="14.5" cy="10.3" r="0.7"/></g><g fill="#c75c86"><circle cx="10.5" cy="1.7" r="0.7"/><circle cx="2.8" cy="9" r="0.7"/><circle cx="18.5" cy="9" r="0.7"/><circle cx="11.5" cy="11.5" r="0.7"/><circle cx="5.5" cy="8.5" r="0.6"/></g></svg>
<div class="t" style="left:840.2px;top:452.0px;font-size:6.75px;color:#5a5a5a;font-weight:normal;-webkit-text-stroke:0.2px #5a5a5a">Jelly Donut</div>
<div class="t" style="left:840.4px;top:460.7px;font-size:4.0px;color:#bdbdbd;font-weight:normal;">Strawberry filling</div>
<svg class="s" style="left:919.5px;top:456.5px;" width="6" height="6" viewBox="0 0 6 6"><path d="M0.6 0.6 L5.4 5.4 M5.4 0.6 L0.6 5.4" stroke="#1a1a1a" stroke-width="1.1"/></svg>
<div class="t" style="left:908.3px;top:457.9px;font-size:14px;color:#585858;font-weight:normal;-webkit-text-stroke:0.45px #585858">4</div>
<svg class="s" style="left:816.9px;top:484.5px;" width="21" height="18" viewBox="0 0 21 18"><defs><linearGradient id="dg" x1="0" y1="0" x2="0" y2="1"><stop offset="0" stop-color="#ffb443"/><stop offset="1" stop-color="#e07f12"/></linearGradient></defs><ellipse cx="10.5" cy="10.3" rx="10.4" ry="7.6" fill="url(#dg)"/><path d="M0.3 8 A10.2 6.6 0 0 1 20.7 8 Q20.5 11 18 11.5 Q16 11 14.5 12.5 Q12 13.2 10 12.5 Q7.5 11.5 5.5 12.5 Q2 12.5 0.6 10.2 Z" fill="#5e3b2e"/><ellipse cx="10.4" cy="6.9" rx="4.4" ry="2.9" fill="#f39a24"/><ellipse cx="10.4" cy="7.6" rx="3.4" ry="1.5" fill="#fbfbfb"/><g fill="#5a97c0"><circle cx="6" cy="2.6" r="0.7"/><circle cx="15.5" cy="2.6" r="0.7"/><circle cx="3.2" cy="6.3" r="0.7"/><circle cx="17.8" cy="6" r="0.7"/><circle cx="8" cy="10.3" r="0.7"/><circle cx="14.5" cy="10.3" r="0.7"/></g><g fill="#c75c86"><circle cx="10.5" cy="1.7" r="0.7"/><circle cx="2.8" cy="9" r="0.7"/><circle cx="18.5" cy="9" r="0.7"/><circle cx="11.5" cy="11.5" r="0.7"/><circle cx="5.5" cy="8.5" r="0.6"/></g></svg>
<div class="t" style="left:840.2px;top:478.2px;font-size:6.75px;color:#5a5a5a;font-weight:normal;-webkit-text-stroke:0.2px #5a5a5a">Jelly Donut</div>
<div class="t" style="left:840.4px;top:486.9px;font-size:4.0px;color:#bdbdbd;font-weight:normal;">Strawberry filling</div>
<svg class="s" style="left:919.5px;top:482.7px;" width="6" height="6" viewBox="0 0 6 6"><path d="M0.6 0.6 L5.4 5.4 M5.4 0.6 L0.6 5.4" stroke="#1a1a1a" stroke-width="1.1"/></svg>
<svg class="s" style="left:906px;top:488px;" width="18" height="18" viewBox="0 0 18 18"><circle cx="9" cy="9" r="8.5" fill="#25d3b8"/></svg>
<svg class="s" style="left:910px;top:492px;" width="10" height="9" viewBox="0 0 10 9"><ellipse cx="5" cy="5.5" rx="4.6" ry="3.2" fill="#f59b2b"/><ellipse cx="5" cy="4.3" rx="4.6" ry="3.2" fill="#5b3a2c"/><ellipse cx="5" cy="4.2" rx="1.5" ry="0.9" fill="#fff"/></svg>
<svg class="s" style="left:926px;top:402px;" width="74" height="10" viewBox="0 0 74 10"><path d="M0 5 H66" stroke="#8c8c8c" stroke-width="1.6"/><path d="M64 1.2 L72.5 5 L64 8.8 Z" fill="#8c8c8c"/></svg>
<div class="t" style="left:1004.8px;top:286.3px;font-size:10.1px;color:#c0c0c0;font-weight:normal;">donutEntryDialogFr...</div>
<svg class="s" style="left:1106.5px;top:292px;" width="11" height="7" viewBox="0 0 11 7"><path d="M3.8 1 H2.8 A2.5 2.5 0 0 0 2.8 6 H3.8 M7.2 1 H8.2 A2.5 2.5 0 0 1 8.2 6 H7.2 M3.5 3.5 H7.5" stroke="#b8b8b8" stroke-width="1.2" fill="none"/></svg>
<div class="r" style="left:1001.3px;top:303.6px;width:120.3px;height:207.6px;background:#101010;border:1.3px solid #74a3d6;border-radius:2px"></div>
<div class="r" style="left:1005.5px;top:308px;width:112px;height:199.5px;background:#fafafa;"></div>
<div class="t" style="left:1009.6px;top:309px;font-size:3.7px;color:#9a9a9a;font-weight:normal;">Donut name</div>
<div class="t" style="left:1039px;top:308.7px;font-size:5.2px;color:#303030;font-weight:normal;">Name</div>
<div class="r" style="left:1039px;top:322.2px;width:74px;height:0.7px;background:#a8a8a8;"></div>
<div class="t" style="left:1009.6px;top:325.8px;font-size:3.7px;color:#9a9a9a;font-weight:normal;">Description</div>
<div class="r" style="left:1039px;top:339.2px;width:74px;height:0.7px;background:#a8a8a8;"></div>
<div class="t" style="left:1009.6px;top:355.8px;font-size:3.7px;color:#9a9a9a;font-weight:normal;">Rating</div>
<svg class="s" style="left:1044.5px;top:363.8px;" width="64" height="12" viewBox="0 0 64 12"><polygon points="5.50,0.10 6.97,3.98 11.11,4.18 7.88,6.77 8.97,10.77 5.50,8.50 2.03,10.77 3.12,6.77 -0.11,4.18 4.03,3.98" fill="#1ecfb8"/><polygon points="18.50,0.10 19.97,3.98 24.11,4.18 20.88,6.77 21.97,10.77 18.50,8.50 15.03,10.77 16.12,6.77 12.89,4.18 17.03,3.98" fill="#1ecfb8"/><polygon points="31.50,0.10 32.97,3.98 37.11,4.18 33.88,6.77 34.97,10.77 31.50,8.50 28.03,10.77 29.12,6.77 25.89,4.18 30.03,3.98" fill="#1ecfb8"/><polygon points="44.50,0.10 45.97,3.98 50.11,4.18 46.88,6.77 47.97,10.77 44.50,8.50 41.03,10.77 42.12,6.77 38.89,4.18 43.03,3.98" fill="#d8d8d8"/><polygon points="57.50,0.10 58.97,3.98 63.11,4.18 59.88,6.77 60.97,10.77 57.50,8.50 54.03,10.77 55.12,6.77 51.89,4.18 56.03,3.98" fill="#d8d8d8"/></svg>
<div class="r" style="left:1024.8px;top:380.2px;width:22px;height:10.1px;background:#d6d6d6;"></div>
<div class="t" style="left:1028.6px;top:375.2px;font-size:3.6px;color:#3a3a3a;font-weight:bold;">CANCEL</div>
<div class="r" style="left:1079px;top:380px;width:22px;height:10.2px;background:#d6d6d6;"></div>
<div class="t" style="left:1085.2px;top:375.2px;font-size:3.6px;color:#3a3a3a;font-weight:bold;">DONE</div>
<div class="r" style="left:1152.7px;top:636.6px;width:18.3px;height:17.4px;background:#3a3c3e;border-radius:3px"></div>
<div class="r" style="left:1154.3px;top:638.2px;width:15px;height:14px;background:#55595d;border-radius:2px"></div>
<svg class="s" style="left:1156.5px;top:640px;" width="11" height="11" viewBox="0 0 11 11"><path d="M3 10 Q1 8 1.2 6 L2.2 4.5 L3 6 V2 Q3.5 1.2 4 2 V5 V1.2 Q4.7 0.5 5.3 1.2 V5 V1.8 Q6 1 6.6 1.8 V5.5 V3 Q7.3 2.3 8 3 V7 Q8 10 5.5 10.5 Z" fill="#3a9be0"/></svg>
<div class="r" style="left:1152.7px;top:657.8px;width:18.3px;height:67.5px;background:#3a3c3e;border-radius:3px"></div>
<svg class="s" style="left:1157px;top:663px;" width="10" height="9" viewBox="0 0 10 9"><path d="M5 0.5 V8.5 M1 4.5 H9" stroke="#c4c4c4" stroke-width="1.4"/></svg>
<svg class="s" style="left:1157px;top:679px;" width="10" height="9" viewBox="0 0 10 9"><path d="M1.5 4 H8.5" stroke="#c4c4c4" stroke-width="1.4"/></svg>
<div class="t" style="left:1157.3px;top:689.4px;font-size:6.4px;color:#c4c4c4;font-weight:bold;">1:1</div>
<svg class="s" style="left:1156.5px;top:711px;" width="10" height="10" viewBox="0 0 10 10"><rect x="0.7" y="0.7" width="8.6" height="8" fill="none" stroke="#b8b8b8" stroke-width="1.2"/><path d="M2.5 7 L7.5 2.5" stroke="#b8b8b8" stroke-width="1.1"/></svg>
<div class="r" style="left:781px;top:737.3px;width:619px;height:13.5px;background:#313234;"></div>
<div class="r" style="left:781px;top:737.2px;width:619px;height:0.8px;background:#38393b;"></div>
<div class="t" style="left:822.7px;top:735.4px;font-size:7.95px;color:#b0b0b0;font-weight:normal;">navigation</div>
<svg class="s" style="left:866px;top:743px;" width="4" height="5" viewBox="0 0 4 5"><path d="M0.5 0.5 L2.8 2.5 L0.5 4.5" stroke="#5f6163" stroke-width="0.8" fill="none"/></svg>
<div class="t" style="left:874.3px;top:735.4px;font-size:8.05px;color:#b0b0b0;font-weight:normal;">dialog</div>
<div class="r" style="left:1180.3px;top:69.5px;width:1px;height:17px;background:#333537;"></div>
<div class="r" style="left:1181px;top:69.5px;width:219px;height:17px;background:#3c3f41;"></div>
<div class="r" style="left:1181px;top:86.5px;width:219px;height:651px;background:#313335;"></div>
<div class="t" style="left:1184.2px;top:68.5px;font-size:7.25px;color:#b4b4b4;font-weight:normal;">Attributes</div>
<svg class="s" style="left:1370px;top:73.5px;" width="10" height="10" viewBox="0 0 10 10"><polygon points="9.60,5.00 8.14,6.30 8.25,8.25 6.30,8.14 5.00,9.60 3.70,8.14 1.75,8.25 1.86,6.30 0.40,5.00 1.86,3.70 1.75,1.75 3.70,1.86 5.00,0.40 6.30,1.86 8.25,1.75 8.14,3.70" fill="#b4b4b4"/><circle cx="5" cy="5" r="1.5" fill="#3c3f41"/></svg>
<div class="r" style="left:1386px;top:78px;width:8.5px;height:1.3px;background:#b4b4b4;"></div>
<svg class="s" style="left:1185px;top:91.3px;" width="7" height="9" viewBox="0 0 7 9"><rect x="0.5" y="0.5" width="6" height="8" rx="1" fill="#9aa6b0"/><rect x="1.7" y="2" width="3.6" height="5" fill="#1e1e1e"/></svg>
<div class="t" style="left:1196px;top:86px;font-size:8.6px;color:#8c8c8c;font-weight:normal;">dialog</div>
<div class="t" style="left:1293.4px;top:86px;font-size:8.75px;color:#c0c0c0;font-weight:normal;">donutEntryDialogFragment</div>
<div class="t" style="left:1185.8px;top:103px;font-size:7.4px;color:#b0b0b0;font-weight:normal;">id</div>
<div class="t" style="left:1185.8px;top:118.5px;font-size:7.1px;color:#b0b0b0;font-weight:normal;">label</div>
<div class="t" style="left:1185.8px;top:133.3px;font-size:6.8px;color:#b0b0b0;font-weight:normal;">name</div>
<div class="r" style="left:1270px;top:107.5px;width:119.6px;height:11.3px;background:#2d2f31;border:1px solid #4a4d50;border-radius:2px"></div>
<div class="r" style="left:1270px;top:122.5px;width:119.6px;height:11.3px;background:#2d2f31;border:1px solid #4a4d50;border-radius:2px"></div>
<div class="r" style="left:1270px;top:137.5px;width:119.6px;height:11.3px;background:#2d2f31;border:1px solid #4a4d50;border-radius:2px"></div>
<div class="t" style="left:1271.8px;top:103px;font-size:8.8px;color:#c8c8c8;font-weight:normal;">donutEntryDialogFragment</div>
<div class="t" style="left:1271.8px;top:118.30000000000001px;font-size:8.75px;color:#c8c8c8;font-weight:normal;">DonutEntryDialogFragment</div>
<div class="r" style="left:1393.5px;top:124px;width:2.5px;height:8px;background:none;border:0.8px solid #66696c;border-radius:1px"></div>
<div class="t" style="left:1274.5px;top:133.3px;width:98px;overflow:hidden;font-size:8.8px;color:#c8c8c8">DonutEntryDialogFragment</div>
<div class="r" style="left:1373px;top:138.5px;width:1px;height:9.5px;background:#4a4d50;"></div>
<svg class="s" style="left:1379px;top:141.8px;" width="6" height="4" viewBox="0 0 6 4"><path d="M0 0 H6 L3 3.5 Z" fill="#b4b4b4"/></svg>
<div class="r" style="left:1181px;top:153.3px;width:219px;height:14.5px;background:#3c3f41;"></div>
<svg class="s" style="left:1184.5px;top:158.05px;" width="7" height="5" viewBox="0 0 7 5"><path d="M0.8 0.8 L3.5 3.8 L6.2 0.8" stroke="#a8a8a8" stroke-width="0.9" fill="none"/></svg>
<div class="t" style="left:1192.8px;top:150.85000000000002px;font-size:8.6px;color:#c4c4c4;font-weight:bold;">Arguments</div>
<svg class="s" style="left:1375px;top:156.55px;" width="9" height="9" viewBox="0 0 9 9"><path d="M4.5 0.5 V8.5 M0.5 4.5 H8.5" stroke="#c4c4c4" stroke-width="1.3"/></svg>
<svg class="s" style="left:1388px;top:156.55px;" width="9" height="9" viewBox="0 0 9 9"><path d="M0.5 4.5 H8.5" stroke="#c4c4c4" stroke-width="1.3"/></svg>
<div class="r" style="left:1181px;top:171.8px;width:219px;height:12.8px;background:#2f65ca;"></div>
<svg class="s" style="left:1186px;top:173.3px;" width="10" height="10" viewBox="0 0 10 10"><circle cx="4.6" cy="4.6" r="4.3" fill="#c8d4ee"/></svg>
<div class="t" style="left:1196.8px;top:168.3px;font-size:8.85px;color:#e8ecf4;font-weight:normal;">itemId: long (-1L)</div>
<div class="r" style="left:1181px;top:187.5px;width:219px;height:14.699999999999989px;background:#3c3f41;"></div>
<svg class="s" style="left:1185.5px;top:191.35px;" width="5" height="7" viewBox="0 0 5 7"><path d="M0.8 0.8 L3.8 3.5 L0.8 6.2" stroke="#a8a8a8" stroke-width="0.9" fill="none"/></svg>
<div class="t" style="left:1191.8px;top:185.15px;font-size:8.45px;color:#c4c4c4;font-weight:bold;">Actions</div>
<svg class="s" style="left:1375px;top:190.85px;" width="9" height="9" viewBox="0 0 9 9"><path d="M4.5 0.5 V8.5 M0.5 4.5 H8.5" stroke="#c4c4c4" stroke-width="1.3"/></svg>
<svg class="s" style="left:1388px;top:190.85px;" width="9" height="9" viewBox="0 0 9 9"><path d="M0.5 4.5 H8.5" stroke="#c4c4c4" stroke-width="1.3"/></svg>
<div class="r" style="left:1181px;top:202.2px;width:219px;height:0.8px;background:#343638;"></div>
<div class="r" style="left:1181px;top:203px;width:219px;height:15px;background:#3c3f41;"></div>
<svg class="s" style="left:1184.5px;top:208.0px;" width="7" height="5" viewBox="0 0 7 5"><path d="M0.8 0.8 L3.5 3.8 L6.2 0.8" stroke="#a8a8a8" stroke-width="0.9" fill="none"/></svg>
<div class="t" style="left:1192.8px;top:200.8px;font-size:8.6px;color:#c4c4c4;font-weight:bold;">Deep Links</div>
<svg class="s" style="left:1375px;top:206.5px;" width="9" height="9" viewBox="0 0 9 9"><path d="M4.5 0.5 V8.5 M0.5 4.5 H8.5" stroke="#c4c4c4" stroke-width="1.3"/></svg>
<svg class="s" style="left:1388px;top:206.5px;" width="9" height="9" viewBox="0 0 9 9"><path d="M0.5 4.5 H8.5" stroke="#c4c4c4" stroke-width="1.3"/></svg>
<svg class="s" style="left:1186px;top:225.5px;" width="9" height="6" viewBox="0 0 9 6"><path d="M3.2 0.8 H2.5 A2.1 2.1 0 0 0 2.5 5 H3.2 M5.8 0.8 H6.5 A2.1 2.1 0 0 1 6.5 5 H5.8 M3 2.9 H6" stroke="#8a8e92" stroke-width="0.9" fill="none"/></svg>
<div class="t" style="left:1197.5px;top:218.8px;font-size:8.85px;color:#b8b8b8;font-weight:normal;">myapp://navdonutcreator.com/donutcreator</div></body></html>
